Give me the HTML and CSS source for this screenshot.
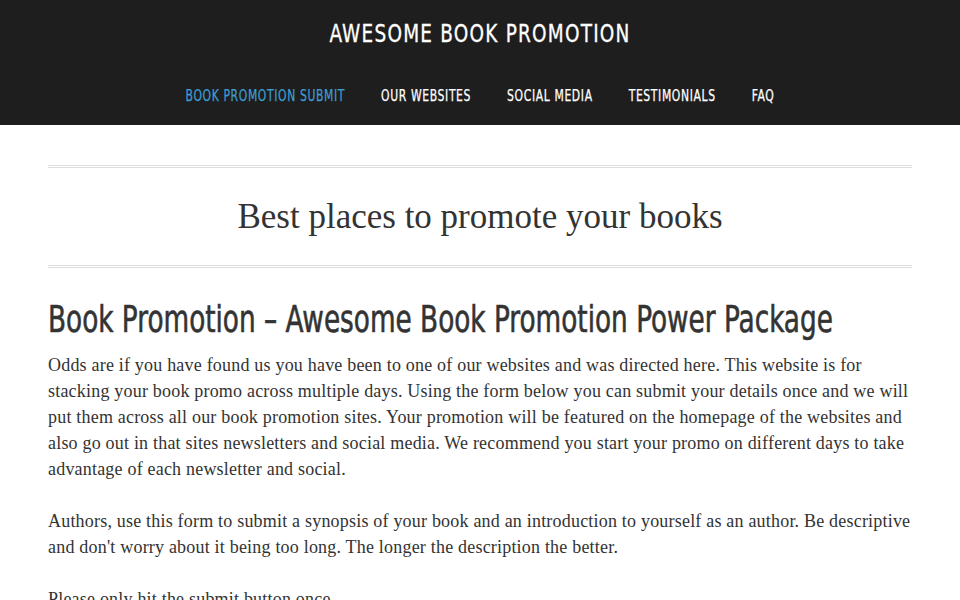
FILE: index.html
```html
<!DOCTYPE html>
<html lang="en">
<head>
<meta charset="utf-8">
<title>Awesome Book Promotion</title>
<link rel="stylesheet" href="styles.css">
</head>
<body>
<header class="site-header">
  <div class="site-title">AWESOME BOOK PROMOTION</div>
  <nav class="nav">
    <a class="nav-item active" href="#">Book Promotion Submit</a>
    <a class="nav-item" href="#">Our Websites</a>
    <a class="nav-item" href="#">Social Media</a>
    <a class="nav-item" href="#">Testimonials</a>
    <a class="nav-item" href="#">FAQ</a>
  </nav>
</header>
<main class="content">
  <div class="tagline-box">
    <p class="tagline">Best places to promote your books</p>
  </div>
  <h1 class="entry-title"><span class="entry-title-text">Book Promotion – Awesome Book Promotion Power Package</span></h1>
  <p class="text">Odds are if you have found us you have been to one of our websites and was directed here. This website is for stacking your book promo across multiple days. Using the form below you can submit your details once and we will put them across all our book promotion sites. Your promotion will be featured on the homepage of the websites and also go out in that sites newsletters and social media. We recommend you start your promo on different days to take advantage of each newsletter and social.</p>
  <p class="text">Authors, use this form to submit a synopsis of your book and an introduction to yourself as an author. Be descriptive and don't worry about it being too long. The longer the description the better.</p>
  <p class="text">Please only hit the submit button once.</p>
</main>
</body>
</html>
```

FILE: styles.css
```css
html, body {
  margin: 0;
  padding: 0;
  background: #fff;
  overflow-x: hidden;
}
body {
  font-family: "Liberation Serif", "DejaVu Serif", serif;
  color: #333;
}
.site-header {
  background: #1e1e1e;
  height: 125px;
  text-align: center;
}
.site-title {
  font-family: "DejaVu Sans Condensed", "DejaVu Sans", sans-serif;
  font-stretch: condensed;
  font-size: 25px;
  letter-spacing: 1.5px;
  color: #fff;
  height: 66px;
  line-height: 68px;
  transform: scaleX(0.82);
  -webkit-text-stroke: 0.3px #fff;
}
.nav {
  display: flex;
  justify-content: center;
  height: 59px;
  align-items: center;
  transform: scaleX(0.8);
}
.nav-item {
  font-family: "DejaVu Sans Condensed", "DejaVu Sans", sans-serif;
  font-stretch: condensed;
  font-size: 15px;
  letter-spacing: 0.8px;
  text-transform: uppercase;
  color: #fff;
  text-decoration: none;
  padding: 0 22.5px;
  -webkit-text-stroke: 0.25px currentColor;
}
.nav-item.active {
  color: #3d9dd2;
}
.content {
  width: 864px;
  margin: 0 auto;
  padding-top: 40px;
}
.tagline-box {
  border-top: 3px double #ddd;
  border-bottom: 3px double #ddd;
  text-align: center;
  padding: 30px 0;
}
.tagline {
  margin: 0;
  font-size: 35px;
  line-height: 37px;
  color: #333;
}
.entry-title {
  font-family: "DejaVu Sans Condensed", "DejaVu Sans", sans-serif;
  font-stretch: condensed;
  font-weight: normal;
  font-size: 38px;
  line-height: 47px;
  margin: 28px 0 9px;
  color: #333;
  white-space: nowrap;
}
.entry-title-text {
  display: inline-block;
  transform: scaleX(0.77);
  transform-origin: left center;
  -webkit-text-stroke: 0.6px #333;
}
.text {
  font-size: 18px;
  letter-spacing: 0.2px;
  line-height: 26px;
  margin: 0 0 26px;
  color: #333;
}
```
